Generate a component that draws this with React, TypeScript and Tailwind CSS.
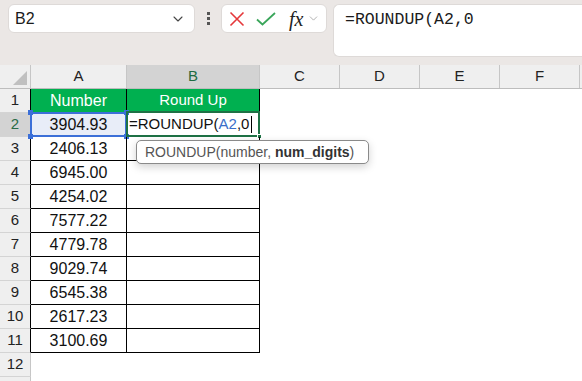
import { ChevronDown } from "lucide-react";

const NUMBERS = [
  "3904.93",
  "2406.13",
  "6945.00",
  "4254.02",
  "7577.22",
  "4779.78",
  "9029.74",
  "6545.38",
  "2617.23",
  "3100.69",
];

const EXTRA_COLS = ["C", "D", "E", "F"];

const RowHeader = ({ n, dark, active }: { n?: number; dark?: boolean; active?: boolean }) => (
  <div
    className={`w-[31px] h-[24px] shrink-0 flex items-center justify-center border-r border-b text-[15px] ${
      dark ? "border-r-black" : "border-r-[#c6c6c6]"
    } border-b-[#d4d4d4] ${active ? "bg-[#d3d3d3] text-[#2a6b46]" : "bg-[#efefef] text-[#222]"}`}
  >
    {n}
  </div>
);

const Handle = ({ pos }: { pos: string }) => (
  <span className={`absolute w-[5px] h-[5px] bg-[#3b6fd8] ${pos}`} />
);

const TopBar = () => (
  <div className="h-[65px] bg-[#ebe7e5] flex items-start pt-1 pl-2 shrink-0">
    <div className="w-[187px] h-[29px] bg-white rounded-md border border-[#dedad8] flex items-center justify-between pl-[6px] pr-[8px] text-[16px] text-[#1b1b1b]">
      <span>B2</span>
      <ChevronDown size={16} strokeWidth={1.6} className="text-[#444]" />
    </div>
    <div className="w-[26px] h-[29px] flex flex-col items-center justify-center gap-[2px]">
      <span className="w-[3px] h-[3px] bg-[#555]" />
      <span className="w-[3px] h-[3px] bg-[#555]" />
      <span className="w-[3px] h-[3px] bg-[#555]" />
    </div>
    <div className="w-[106px] h-[29px] bg-white rounded-md border border-[#dedad8] flex items-center pl-[7px]">
      <svg width="16" height="16" viewBox="0 0 16 16" className="mr-[11px]">
        <path d="M1.5 1.5 L14.5 14.5 M14.5 1.5 L1.5 14.5" stroke="#e5383b" strokeWidth="1.6" fill="none" />
      </svg>
      <svg width="20" height="14" viewBox="0 0 20 14" className="mr-[13px]">
        <path d="M1 7.5 L6.5 12.5 L19 1" stroke="#3aa65a" strokeWidth="1.8" fill="none" />
      </svg>
      <span className="font-['Liberation_Serif'] italic text-[20px] leading-none text-[#222] mr-[4px]">
        fx
      </span>
      <ChevronDown size={13} strokeWidth={1.4} className="text-[#9a9a9a]" />
    </div>
    <div className="ml-[6px] flex-1 h-[53px] bg-white rounded-l-md border border-r-0 border-[#dedad8] pl-[11px] pt-[3px] font-['Liberation_Mono'] text-[16.5px] text-[#1b1b1b]">
      =ROUNDUP(A2,0
    </div>
  </div>
);

const ColHeaders = () => (
  <div className="flex h-[24px] bg-[#efefef] border-b border-[#bdbdbd] text-[15px] text-[#222] shrink-0">
    <div className="w-[31px] shrink-0 border-r border-[#c6c6c6] relative">
      <svg width="14" height="14" viewBox="0 0 14 14" className="absolute right-[3px] bottom-[3px]">
        <path d="M14 0 L14 14 L0 14 Z" fill="#c0c0c0" />
      </svg>
    </div>
    <div className="w-[96px] shrink-0 border-r border-[#c6c6c6] flex items-center justify-center">A</div>
    <div className="w-[133px] shrink-0 border-r border-[#c6c6c6] flex items-center justify-center bg-[#d3d3d3] text-[#1e6b41]">
      B
    </div>
    {EXTRA_COLS.map((c) => (
      <div key={c} className="w-[80px] shrink-0 border-r border-[#c6c6c6] flex items-center justify-center">
        {c}
      </div>
    ))}
    <div className="flex-1" />
  </div>
);

export default function App() {
  return (
    <div className="w-[582px] h-[381px] overflow-hidden bg-white flex flex-col font-['Liberation_Sans',sans-serif]">
      <TopBar />
      <ColHeaders />

      {/* row 1: table header */}
      <div className="flex">
        <RowHeader n={1} dark />
        <div className="w-[96px] h-[24px] shrink-0 bg-[#00b050] border-r border-b border-black flex items-center justify-center text-white text-[16px]">
          Number
        </div>
        <div className="w-[133px] h-[24px] shrink-0 bg-[#00b050] border-r border-b border-black flex items-center justify-center text-white text-[15px]">
          Round Up
        </div>
      </div>

      {NUMBERS.map((v, i) => {
        const row = i + 2;
        const editing = row === 2;
        return (
          <div key={row} className="flex">
            <RowHeader n={row} dark active={editing} />
            <div
              className={`relative w-[96px] h-[24px] shrink-0 border-r border-b border-black flex items-center justify-center text-[16px] text-[#111] ${
                editing ? "bg-[#e8edf8]" : ""
              }`}
            >
              {v}
              {editing && (
                <>
                  <span className="absolute -left-[1px] -top-[1px] -right-[1px] -bottom-[1px] border-2 border-[#3b6fd8]" />
                  <Handle pos="-left-[3px] -top-[3px]" />
                  <Handle pos="-right-[3px] -top-[3px]" />
                  <Handle pos="-left-[3px] -bottom-[3px]" />
                  <Handle pos="-right-[3px] -bottom-[3px]" />
                </>
              )}
            </div>
            <div className="relative w-[133px] h-[24px] shrink-0 border-r border-b border-black flex items-center text-[15px] text-[#111]">
              {editing && (
                <>
                  <span className="pl-[2px] flex items-center">
                    =ROUNDUP(<span className="text-[#3a6fc9]">A2</span>,0
                    <span className="ml-[2px] w-[1px] h-[17px] bg-black" />
                  </span>
                  <span className="absolute -left-[1px] -top-[2px] -right-[1px] -bottom-[1px] border-2 border-[#1e7145]" />
                  <span className="absolute -right-[3px] -bottom-[3px] w-[5px] h-[5px] bg-[#1e7145] border border-white" />
                  <div className="absolute left-[9px] top-[27px] z-10 h-[24px] w-[233px] bg-white border border-[#8a8a8a] rounded-[5px] shadow-[0_3px_8px_rgba(0,0,0,0.18)] flex items-center pl-[8px] text-[14px] text-[#555] whitespace-nowrap">
                    ROUNDUP(number,&nbsp;<b className="text-[#333]">num_digits</b>)
                  </div>
                </>
              )}
            </div>
          </div>
        );
      })}

      <div className="flex">
        <RowHeader n={12} />
      </div>
      <div className="flex">
        <RowHeader />
      </div>
    </div>
  );
}
